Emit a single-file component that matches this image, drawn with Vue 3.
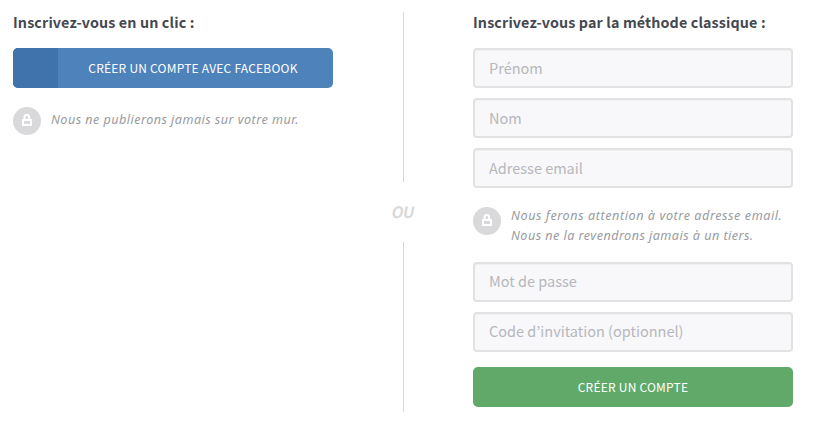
<script setup>
import { h } from 'vue'

const identityFields = [
  { name: 'firstname', type: 'text', label: 'Prénom' },
  { name: 'lastname', type: 'text', label: 'Nom' },
  { name: 'email', type: 'email', label: 'Adresse email' },
]
const accessFields = [
  { name: 'password', type: 'password', label: 'Mot de passe' },
  { name: 'invitation', type: 'text', label: 'Code d’invitation (optionnel)' },
]

const LockBadge = () =>
  h('svg', { width: 28, height: 28, viewBox: '0 0 28 28', 'aria-hidden': 'true' }, [
    h('circle', { cx: 14, cy: 14, r: 14, fill: '#d9d9db' }),
    h('path', { d: 'M11.5 13V10.3a2.3 2.3 0 0 1 4.6 0V13', fill: 'none', stroke: '#fff', 'stroke-width': 2 }),
    h('path', { d: 'M9 12h10v7H9zM11 14v3h6v-3z', fill: '#fff', 'fill-rule': 'evenodd' }),
  ])
</script>

<template>
  <main class="signup">
    <section class="column">
      <h2 class="title">Inscrivez-vous en un clic :</h2>
      <button type="button" class="button facebook">
        <span class="facebook-icon"></span>
        <span class="facebook-label">Créer un compte avec Facebook</span>
      </button>
      <div class="note note-single">
        <LockBadge />
        <p class="note-text">Nous ne publierons jamais sur votre mur.</p>
      </div>
    </section>

    <div class="divider"><span class="or">OU</span></div>

    <form class="column" @submit.prevent>
      <h2 class="title">Inscrivez-vous par la méthode classique :</h2>
      <div class="fields">
        <input v-for="f in identityFields" :key="f.name" class="field" :type="f.type" :name="f.name" :placeholder="f.label" />
      </div>
      <div class="note">
        <LockBadge />
        <p class="note-text">
          <span class="line line-wide">Nous ferons attention à votre adresse email.</span>
          <span class="line">Nous ne la revendrons jamais à un tiers.</span>
        </p>
      </div>
      <div class="fields access">
        <input v-for="f in accessFields" :key="f.name" class="field" :type="f.type" :name="f.name" :placeholder="f.label" />
      </div>
      <button type="submit" class="button submit">Créer un compte</button>
    </form>
  </main>
</template>

<style>
body {
  background: #fff;
}
</style>

<style scoped>
.signup {
  display: grid;
  grid-template-columns: 320px 140px 320px;
  box-sizing: border-box;
  height: 442px;
  padding: 12px 13px 30px;
  font-family: "Noto Sans CJK KR", "Noto Sans", sans-serif;
}
.title {
  margin: 0;
  height: 36px;
  font-size: 14.3px;
  line-height: 20px;
  font-weight: 700;
  letter-spacing: 0.13px;
  color: #454850;
  white-space: nowrap;
}
.button {
  display: flex;
  align-items: center;
  justify-content: center;
  width: 320px;
  height: 40px;
  padding: 0;
  border: 0;
  border-radius: 5px;
  overflow: hidden;
  color: #fff;
  font-family: inherit;
  font-size: 12px;
  line-height: 20px;
  letter-spacing: 0.23px;
  text-transform: uppercase;
}
.facebook {
  background: #4e82ba;
}
.facebook-icon {
  width: 45px;
  height: 40px;
  background: #4072ac;
}
.facebook-label {
  flex: 1;
  padding-right: 5px;
  text-align: center;
}
.submit {
  margin-top: 15px;
  background: #60a969;
}
.note {
  display: flex;
  gap: 10px;
  height: 38px;
  margin-top: 19px;
}
.note svg {
  flex: none;
}
.note-text {
  margin: -1px 0 0;
  font-family: "Noto Sans", sans-serif;
  font-style: italic;
  font-size: 12.6px;
  line-height: 20px;
  letter-spacing: 0.46px;
  color: #9a9b9f;
  white-space: nowrap;
}
.note-single .note-text {
  margin-top: 3px;
}
.line {
  display: block;
}
.line-wide {
  letter-spacing: 0.57px;
}
.fields {
  display: grid;
  gap: 10px;
}
.access {
  margin-top: 17px;
}
.field {
  box-sizing: border-box;
  width: 320px;
  height: 40px;
  padding: 0 14px 2px;
  border: 2px solid #e2e2e3;
  border-radius: 4px;
  background: #f8f8fb;
  box-shadow: inset 0 1px 0 #f1f1f3;
  font-family: inherit;
  font-size: 14.5px;
  outline: none;
}
.access .field {
  padding-bottom: 4px;
}
.field::placeholder {
  color: #b6b7bb;
  opacity: 1;
}
.divider {
  display: flex;
  flex-direction: column;
  align-items: center;
}
.divider::before,
.divider::after {
  content: "";
  width: 1px;
  height: 170px;
  background: #d9d9db;
}
.or {
  height: 60px;
  font-size: 15.5px;
  line-height: 59px;
  font-weight: 700;
  letter-spacing: -0.8px;
  transform: skewX(-11deg);
  color: #d9d9db;
}
</style>
